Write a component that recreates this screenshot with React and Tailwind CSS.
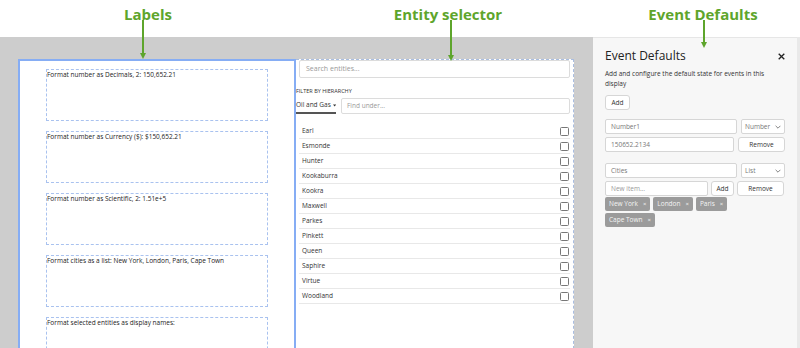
import React from 'react';

const labels = [
  'Format number as Decimals, 2: 150,652.21',
  'Format number as Currency ($): $150,652.21',
  'Format number as Scientific, 2: 1.51e+5',
  'Format cities as a list: New York, London, Paris, Cape Town',
  'Format selected entities as display names:',
];

const entities = ['Earl', 'Esmonde', 'Hunter', 'Kookaburra', 'Kookra', 'Maxwell', 'Parkes', 'Pinkett', 'Queen', 'Saphire', 'Virtue', 'Woodland'];

const cities = ['New York', 'London', 'Paris', 'Cape Town'];

function Annotation({ text, left, center, arrowTop, arrowBottom }) {
  return (
    <>
      <div
        className="absolute top-[3px] text-[15px] font-bold text-[#5ea52c] -translate-x-1/2 whitespace-nowrap"
        style={{ left: center }}
      >
        {text}
      </div>
      <div className="absolute w-[2px] bg-[#5ea52c]" style={{ left: left, top: arrowTop, height: arrowBottom - arrowTop }} />
      <div
        className="absolute w-0 h-0 border-l-[3px] border-r-[3px] border-t-[6px] border-l-transparent border-r-transparent border-t-[#5ea52c]"
        style={{ left: left - 2, top: arrowBottom - 1 }}
      />
    </>
  );
}

function Select({ value, w }) {
  return (
    <div className={`flex items-center justify-between h-[15px] ${w} bg-white border border-[#d6d6d6] rounded-[2px] pl-[3px] pr-[3px] text-[#777]`}>
      <span>{value}</span>
      <svg width="6" height="4" viewBox="0 0 7 5"><path d="M0.5 1 L3.5 4 L6.5 1" fill="none" stroke="#555" strokeWidth="0.9" /></svg>
    </div>
  );
}

function Button({ children, w }) {
  return (
    <div className={`flex items-center justify-center h-[15px] ${w} bg-white border border-[#d6d6d6] rounded-[3px] text-[#333]`}>
      {children}
    </div>
  );
}

export default function App() {
  return (
    <div className="relative w-[800px] h-[348px] overflow-hidden flex flex-col bg-white text-[#222]" style={{ fontFamily: '"Open Sans", "Noto Sans", sans-serif' }}>
      <header className="h-[37px] shrink-0 bg-white" />
      <main className="flex flex-1 min-h-0 bg-[#cdcdcd]">
        <div className="flex pl-[18px] pt-[22px] w-[593px] shrink-0">
          <section className="w-[278px] h-[300px] shrink-0 bg-white border-2 border-[#86adf4] pl-[26px] pt-[8px] flex flex-col gap-[10px]">
            {labels.map((l) => (
              <div key={l} className="w-[222px] h-[52px] shrink-0 border border-dashed border-[#a9c2ef] text-[6.5px] leading-[10px] text-[#222]">
                {l}
              </div>
            ))}
          </section>
          <section className="w-[278px] h-[300px] shrink-0 bg-white border border-dashed border-[#a9bde0] border-l-0 px-[3px]">
            <div className="h-[18px] border border-[#dcdcdc] rounded-[2px] flex items-center px-[6px] text-[7px] text-[#999]">Search entities...</div>
            <div className="mt-[9px] text-[5.5px] leading-[8px] text-[#333] -ml-[3px]">FILTER BY HIERARCHY</div>
            <div className="flex items-start gap-[5px] mt-[3px] -ml-[3px]">
              <div className="w-[40px] h-[16px] flex items-center gap-[2px] whitespace-nowrap border-b-2 border-[#555] text-[6.5px] text-[#333]">
                Oil and Gas
                <svg width="5" height="3" viewBox="0 0 5 3"><path d="M0 0 L5 0 L2.5 3 Z" fill="#333" /></svg>
              </div>
              <div className="flex-1 h-[16px] border border-[#dcdcdc] rounded-[2px] flex items-center px-[5px] text-[6.5px] text-[#999]">Find under...</div>
            </div>
            <div className="mt-[10px] flex flex-col">
              {entities.map((e) => (
                <div key={e} className="h-[15px] flex items-center justify-between border-b border-[#e8e8e8] pl-[3px] pr-[1px] text-[6.5px] text-[#333]">
                  <span>{e}</span>
                  <div className="w-[9px] h-[9px] border border-[#777] rounded-[1.5px]" />
                </div>
              ))}
            </div>
          </section>
        </div>
        <aside className="w-[204px] shrink-0 bg-[#f7f7f7] border-t border-[#e6e6e6] px-[12px] pt-[9px] text-[6.5px]">
          <div className="flex items-center justify-between">
            <span className="text-[12px] text-[#222]">Event Defaults</span>
            <svg width="7" height="7" viewBox="0 0 7 7"><path d="M0.7 0.7 L6.3 6.3 M6.3 0.7 L0.7 6.3" stroke="#222" strokeWidth="1.3" /></svg>
          </div>
          <p className="mt-[4px] leading-[10px] text-[#333] w-[160px]">Add and configure the default state for events in this display</p>
          <div className="mt-[6px]"><Button w="w-[25px]">Add</Button></div>
          <div className="mt-[9px] flex gap-[4px]">
            <div className="h-[15px] w-[132px] bg-white border border-[#d6d6d6] rounded-[2px] px-[5px] flex items-center text-[#777]">Number1</div>
            <Select value="Number" w="w-[44px]" />
          </div>
          <div className="mt-[3px] flex gap-[4px]">
            <div className="h-[15px] w-[129px] bg-white border border-[#d6d6d6] rounded-[2px] px-[5px] flex items-center text-[#777]">150652.2134</div>
            <Button w="w-[47px]">Remove</Button>
          </div>
          <div className="mt-[11px] flex gap-[4px]">
            <div className="h-[15px] w-[132px] bg-white border border-[#d6d6d6] rounded-[2px] px-[5px] flex items-center text-[#777]">Cities</div>
            <Select value="List" w="w-[44px]" />
          </div>
          <div className="mt-[3px] flex gap-[3px]">
            <div className="h-[15px] w-[103px] bg-white border border-[#d6d6d6] rounded-[2px] px-[5px] flex items-center text-[#999]">New item...</div>
            <Button w="w-[23px]">Add</Button>
            <Button w="w-[47px]">Remove</Button>
          </div>
          <div className="mt-[1px] flex flex-wrap gap-x-[3px] gap-y-[2px] w-[140px]">
            {cities.map((c) => (
              <div key={c} className="h-[14px] flex items-center gap-[5px] bg-[#9b9b9b] rounded-[2px] px-[4px] text-[#f4f4f4]">
                <span>{c}</span>
                <span className="text-[6px]">×</span>
              </div>
            ))}
          </div>
        </aside>
        <div className="w-[3px] shrink-0 bg-[#e9e9e9]" />
      </main>
      <Annotation text="Labels" center={148} left={142} arrowTop={20} arrowBottom={54} />
      <Annotation text="Entity selector" center={448} left={450} arrowTop={20} arrowBottom={56} />
      <Annotation text="Event Defaults" center={703} left={703} arrowTop={20} arrowBottom={43} />
    </div>
  );
}
